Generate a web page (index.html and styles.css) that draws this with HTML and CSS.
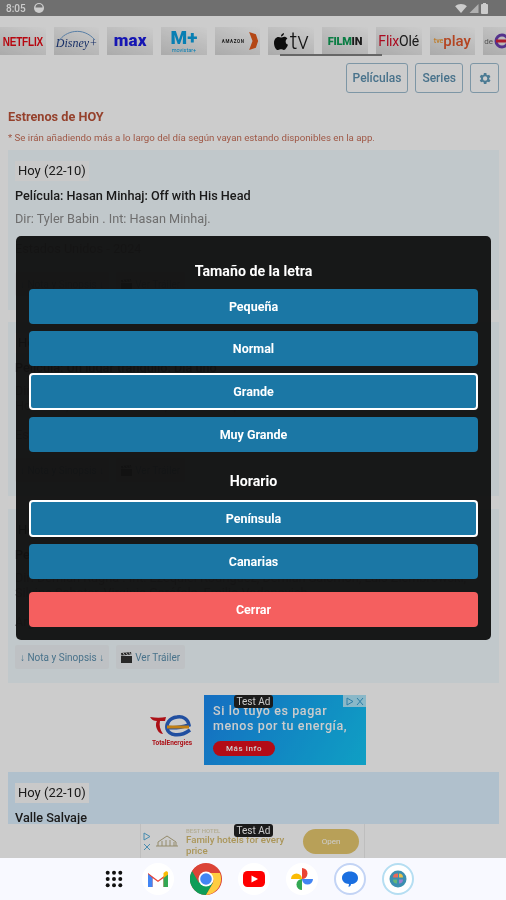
FILE: index.html
```html
<!DOCTYPE html>
<html lang="es">
<head>
<meta charset="UTF-8">
<title>Estrenos de HOY</title>
<link rel="stylesheet" href="styles.css">
</head>
<body>
<div id="page">
	<div id="statusbar">
		<span class="clock">8:05</span>
		<svg class="dot" width="10" height="10" viewBox="0 0 10 10"><circle cx="5" cy="5" r="5" fill="#fff"/><path d="M1.500 4.500a3.500 3.500 0 0 1 7 0z" fill="#8b8b8b"/></svg>
		<span class="status-right">
			<svg width="12" height="9" viewBox="0 0 13 10"><path d="M0 2.500C3.500-.8 9.500-.8 13 2.500L6.500 10z" fill="#fff"/></svg>
			<svg width="10" height="9" viewBox="0 0 10 10"><path d="M10 0v10H0z" fill="#ddd"/></svg>
			<svg width="7" height="11" viewBox="0 0 7 11"><rect y="1" width="7" height="10" rx="1" fill="#fff"/><rect x="2" width="3" height="2" fill="#fff"/></svg>
		</span>
	</div>
	<div id="logos">
		<div class="tile netflix"><span>NETFLIX</span></div>
		<div class="tile disney"><svg class="arc" width="40" height="14" viewBox="0 0 40 14"><path d="M2 13C8 3 26-2 38 12" fill="none" stroke="#6f9fd0"/></svg>Disney+</div>
		<div class="tile max">max</div>
		<div class="tile movistar"><b>M+</b><small>movistar+</small></div>
		<div class="tile prime"><i>AMAZON</i><svg width="13" height="18" viewBox="0 0 10 16"><path d="M2 0l6 2 2 6-2 6-6 2 3-8z" fill="#e2591b"/></svg></div>
		<div class="tile apple"><svg width="14" height="17" viewBox="0 0 14 17"><path d="M10 0c.2 1.800-1.400 3.500-3 3.400C6.800 1.800 8.400.2 10 0zM7 4.500c1 0 1.800-.8 3.300-.8 1.100 0 2.300.6 3.100 1.700-2.600 1.500-2.200 5.300.6 6.400-.8 2-2.400 5.200-4.100 5.200-1.100 0-1.600-.7-2.900-.7s-1.800.7-2.900.7C1.800 17 0 13.300 0 9.900 0 6.300 2.200 4 4.400 4c1.100 0 1.900.5 2.600.5z" fill="#111"/></svg><span>tv</span></div>
		<div class="tile filmin"><span>FILM</span><span>IN</span></div>
		<div class="tile flixole"><span>Flix</span>Olé</div>
		<div class="tile play"><small>tve</small>play</div>
		<div class="tile atres">de<svg width="14" height="16" viewBox="0 0 14 16"><circle cx="8" cy="8" r="6" fill="none" stroke="#6a3fb0" stroke-width="3"/><path d="M2 8h12" stroke="#d8213a" stroke-width="3"/></svg></div>
	</div>
	<div class="logo-scroll"></div>
	<div id="tabs">
		<a class="tab">Películas</a>
		<a class="tab">Series</a>
		<a class="tab gear"><svg width="15" height="15" viewBox="0 0 24 24"><path d="M19.400 13a7.500 7.500 0 0 0 0-2l2.100-1.600-2-3.500-2.500 1a7.500 7.500 0 0 0-1.700-1L15 3.200h-4l-.4 2.700a7.500 7.500 0 0 0-1.700 1l-2.500-1-2 3.500L6.500 11a7.500 7.500 0 0 0 0 2l-2.100 1.600 2 3.500 2.500-1a7.500 7.500 0 0 0 1.700 1l.4 2.700h4l.4-2.700a7.500 7.500 0 0 0 1.700-1l2.500 1 2-3.500zM13 15.500a3.500 3.500 0 1 1 0-7 3.500 3.500 0 0 1 0 7z" fill="#5f9ab8"/></svg></a>
	</div>
	<h2 class="heading">Estrenos de HOY</h2>
	<p class="note">* Se irán añadiendo más a lo largo del día según vayan estando disponibles en la app.</p>

	<div class="card">
		<span class="date">Hoy (22-10)</span>
		<p class="title">Película: Hasan Minhaj: Off with His Head</p>
		<p class="crew">Dir: Tyler Babin . Int: Hasan Minhaj.</p>
		<p class="country">Estados Unidos - 2024</p>
		<div class="actions">
			<a class="chip">↓ Nota y Sinopsis ↓</a>
			<a class="chip"><svg class="clapper" width="11" height="11" viewBox="0 0 11 11"><path d="M0 4h11v7H0zM0 1l10-1 .4 2.500-10 1z" fill="#333"/><path d="M2 .8l1.500 2.300M5 .5l1.500 2.300M8 .2l1.500 2.300" stroke="#ddd"/></svg>Ver Tráiler</a>
		</div>
	</div>
	<div class="card">
		<span class="date">Hoy (22-10)</span>
		<p class="title">Película: Un lugar tranquilo: Día uno</p>
		<p class="crew long">Dir: Michael Sarnoski . Int: Lupita Nyong'o, Joseph Quinn, Alex Wolff, Djimon Hounsou, Thomas Bennett, Eunice Cho, Eliane Umuhire.</p>
		<p class="country">Estados Unidos - 2024</p>
		<div class="actions">
			<a class="chip">↓ Nota y Sinopsis ↓</a>
			<a class="chip"><svg class="clapper" width="11" height="11" viewBox="0 0 11 11"><path d="M0 4h11v7H0zM0 1l10-1 .4 2.500-10 1z" fill="#333"/><path d="M2 .8l1.500 2.300M5 .5l1.500 2.300M8 .2l1.500 2.300" stroke="#ddd"/></svg>Ver Tráiler</a>
		</div>
	</div>
	<div class="card">
		<span class="date">Hoy (22-10)</span>
		<p class="title">Película: Cuando acecha la maldad</p>
		<p class="crew long">Dir: Demián Rugna . Int: Ezequiel Rodríguez, Demián Salomón, Luis Ziembrowski, Silvina Sabater, Virginia Garófalo, Emilio Vodanovich.</p>
		<p class="country">Argentina - 2023</p>
		<div class="actions">
			<a class="chip">↓ Nota y Sinopsis ↓</a>
			<a class="chip"><svg class="clapper" width="11" height="11" viewBox="0 0 11 11"><path d="M0 4h11v7H0zM0 1l10-1 .4 2.500-10 1z" fill="#333"/><path d="M2 .8l1.500 2.300M5 .5l1.500 2.300M8 .2l1.500 2.300" stroke="#ddd"/></svg>Ver Tráiler</a>
		</div>
	</div>

	<div class="banner">
		<div class="te-logo">
			<svg width="44" height="26" viewBox="0 0 44 26"><path d="M16 14c4 1 13 1 23-2-1-6-6-9-12-8-8 1-11 7-10 12 2 6 12 9 23 1" fill="none" stroke="#2a63c9" stroke-width="3.500"/><path d="M17 14h22" stroke="#f3a01a" stroke-width="3"/><path d="M0 4c6 1 11 1 16 0l-1 4h-5c-1 4 0 9 3 13-3 0-6-3-7-8 0-2 0-4 1-5-3 0-5-1-7-4z" fill="#d8141c"/></svg>
			<span>TotalEnergies</span>
		</div>
		<div class="te-ad">
			<p>Si lo tuyo es pagar<br>menos por tu energía,</p>
			<span class="te-btn">Más info</span>
			<span class="adchoice"><svg width="8" height="9" viewBox="0 0 8 9"><path d="M1 1l6 3.500L1 8z" fill="none" stroke="#3a9ed0"/></svg><svg width="8" height="9" viewBox="0 0 8 9"><path d="M1 1l6 7M7 1L1 8" stroke="#3a9ed0"/></svg></span>
		</div>
		<span class="testad">Test Ad</span>
	</div>

	<div class="card blue">
		<span class="date">Hoy (22-10)</span>
		<p class="title">Valle Salvaje</p>
	</div>

	<div id="bottomad">
		<div class="ad-inner">
			<div class="ad-mark">
				<svg width="8" height="9" viewBox="0 0 8 9"><path d="M1 1l6 3.500L1 8z" fill="none" stroke="#5ab0dc"/></svg>
				<svg width="8" height="8" viewBox="0 0 8 8"><path d="M1 1l6 6M7 1L1 7" stroke="#5ab0dc"/></svg>
			</div>
			<svg class="hotel" width="24" height="12" viewBox="0 0 24 12"><path d="M1 11h22M3 11V7l9-6 9 6v4M7 11V6M11 11V5M15 11V5M19 11V7" fill="none" stroke="#b9ae86"/></svg>
			<div class="ad-text">
				<small>BEST HOTEL</small>
				<p>Family hotels for every price</p>
			</div>
			<span class="open">Open</span>
		</div>
		<span class="testad">Test Ad</span>
	</div>

	<div id="dim"></div>

	<div id="modal">
		<h3 class="modal-title">Tamaño de la letra</h3>
		<button class="opt">Pequeña</button>
		<button class="opt">Normal</button>
		<button class="opt selected">Grande</button>
		<button class="opt">Muy Grande</button>
		<h3 class="modal-title second">Horario</h3>
		<button class="opt selected">Península</button>
		<button class="opt">Canarias</button>
		<button class="opt close">Cerrar</button>
	</div>
</div>

<div id="navbar">
	<svg class="apps" width="18" height="18" viewBox="0 0 20 20" fill="#111"><circle cx="3" cy="3" r="2.200"/><circle cx="10" cy="3" r="2.200"/><circle cx="17" cy="3" r="2.200"/><circle cx="3" cy="10" r="2.200"/><circle cx="10" cy="10" r="2.200"/><circle cx="17" cy="10" r="2.200"/><circle cx="3" cy="17" r="2.200"/><circle cx="10" cy="17" r="2.200"/><circle cx="17" cy="17" r="2.200"/></svg>
	<svg width="32" height="32" viewBox="0 0 32 32"><circle cx="16" cy="16" r="16" fill="#fff"/><path d="M6 24V10l10 7.500L26 10v14h-4.500V15L16 19l-5.500-4v9z" fill="#ea4335"/><path d="M6 24h4.500v-9L6 11z" fill="#4285f4"/><path d="M21.500 24H26V11l-4.500 4z" fill="#34a853"/><path d="M21.500 15L26 11.500V10c0-1.500-1.500-2-2.500-1.500L21.500 10z" fill="#fbbc04"/></svg>
	<svg width="32" height="32" viewBox="0 0 32 32"><circle cx="16" cy="16" r="16" fill="#db4437"/><path d="M16 16L2.100 8A16 16 0 0 0 16 32l7-12z" fill="#0f9d58"/><path d="M16 10h13.900A16 16 0 0 1 16 32l7-12a8 8 0 0 0-7-10z" fill="#ffcd40"/><path d="M2.100 8L9 20a8 8 0 0 1 7-10h13.900A16 16 0 0 0 2.100 8z" fill="#db4437"/><circle cx="16" cy="16" r="7.500" fill="#fff"/><circle cx="16" cy="16" r="5.800" fill="#4285f4"/></svg>
	<svg width="32" height="32" viewBox="0 0 32 32"><circle cx="16" cy="16" r="16" fill="#fff"/><rect x="5" y="8" width="22" height="16" rx="4.500" fill="#f00"/><path d="M13.500 12.500L20 16l-6.500 3.500z" fill="#fff"/></svg>
	<svg width="32" height="32" viewBox="0 0 32 32"><circle cx="16" cy="16" r="16" fill="#fff"/><path d="M16 16V5a5.500 5.500 0 0 1 0 11z" fill="#ea4335"/><path d="M16 16h11a5.500 5.500 0 0 1-11 0z" fill="#4285f4"/><path d="M16 16v11a5.500 5.500 0 0 1 0-11z" fill="#34a853"/><path d="M16 16H5a5.500 5.500 0 0 1 11 0z" fill="#fbbc04"/></svg>
	<svg width="32" height="32" viewBox="0 0 32 32"><circle cx="16" cy="16" r="15" fill="#fff" stroke="#c3d4f5" stroke-width="2"/><path d="M8 15c0-4 3.500-6.500 8-6.500s8 2.500 8 6.500-3.500 6-7 6c0 1.500-1 2.500-2.500 3l.5-3c-4-.3-7-2.500-7-6z" fill="#1a6fe0"/></svg>
	<svg width="32" height="32" viewBox="0 0 32 32"><circle cx="16" cy="16" r="15" fill="#fff" stroke="#b5def2" stroke-width="2"/><circle cx="16" cy="16" r="8.500" fill="#3c8fb0"/><path d="M16 10.500h-1a4 4 0 0 0-4 4h5z" fill="#ea6a5a"/><path d="M17 10.500a4 4 0 0 1 4 4h-4z" fill="#e8c14a"/><path d="M11 16.500a4 4 0 0 0 4 4v-4z" fill="#66b877"/><path d="M17 16.500v4a4 4 0 0 0 4-4z" fill="#9d7fd0"/></svg>
</div>
</body>
</html>
```

FILE: styles.css
```css
*{
	box-sizing: border-box;
}
html, body{
	margin: 0;
	padding: 0;
}
body{
	width: 506px;
	height: 900px;
	overflow: hidden;
	font-family: Roboto, sans-serif;
	background-color: #fff;
}
p, h2, h3{
	margin: 0;
}
#page{
	position: relative;
	height: 858px;
	overflow: hidden;
	background-color: #fff;
	filter: blur(.4px);
}

/* status bar */
#statusbar{
	height: 16px;
	background-color: #8b8b8b;
	color: #fff;
	display: flex;
	align-items: center;
	padding: 0 18px 0 6px;
	font-size: 10px;
	font-weight: 500;
}
.dot{
	margin-left: 8px;
}
.status-right{
	margin-left: auto;
	display: flex;
	align-items: center;
	gap: 2px;
}

/* logos */
#logos{
	display: flex;
	gap: 8px;
	padding: 11px 0 0 0;
	width: 520px;
}
.tile{
	position: relative;
	flex: 0 0 45.700px;
	height: 28px;
	background: linear-gradient(20deg, #d6d6d6, #ececec 55%, #fff);
	display: flex;
	align-items: center;
	justify-content: center;
	overflow: hidden;
}
.netflix{
	color: #e50914;
	font-family: "Liberation Sans", sans-serif;
	font-weight: bold;
	font-size: 10px;
	letter-spacing: -.2px;
}
.netflix span{
	display: inline-block;
	transform: scaleY(1.3);
}
.disney{
	color: #1d3b80;
	font-family: "Liberation Serif", serif;
	font-style: italic;
	font-size: 12px;
	padding-top: 4px;
}
.arc{
	position: absolute;
	top: 1px;
	left: 3px;
}
.max{
	color: #1c1ce0;
	font-size: 17px;
	font-weight: 900;
	letter-spacing: .1px;
	padding-bottom: 2px;
}
.movistar{
	flex-direction: column;
	color: #0b9fe0;
}
.movistar b{
	font-size: 19px;
	line-height: 19px;
	font-weight: 900;
}
.movistar small{
	font-size: 5.500px;
	line-height: 7px;
}
.prime{
	justify-content: flex-end;
	gap: 2px;
	padding-right: 1px;
}
.prime i{
	font-size: 4.500px;
	font-style: normal;
	font-weight: bold;
	letter-spacing: .6px;
	color: #222;
}
.apple{
	gap: 2px;
	font-size: 24px;
	font-weight: 300;
	color: #1a1a1a;
}
.filmin{
	font-size: 11px;
	font-weight: 900;
	letter-spacing: -.3px;
	color: #0e9d56;
}
.filmin span + span{
	color: #222;
}
.flixole{
	font-size: 14px;
	letter-spacing: -.2px;
	color: #222;
}
.flixole span{
	color: #d5102a;
}
.play{
	color: #e0552a;
	font-size: 15px;
	font-weight: 500;
}
.play small{
	font-size: 7px;
	color: #ee9a30;
}
.atres{
	font-size: 8px;
	justify-content: flex-start;
	color: #666;
	gap: 1px;
	padding-left: 1px;
}
.logo-scroll{
	position: absolute;
	top: 54px;
	left: 280px;
	width: 102px;
	height: 2px;
	background-color: #808080;
}

/* tabs */
#tabs{
	display: flex;
	justify-content: flex-end;
	gap: 7px;
	padding: 8px 7px 0 0;
}
.tab{
	height: 30px;
	padding: 0 6px;
	border: 1px solid #9dbccf;
	border-radius: 3px;
	color: #5b8fae;
	font-size: 12px;
	font-weight: 500;
	display: flex;
	align-items: center;
}
.gear{
	width: 29px;
	justify-content: center;
	padding: 0;
}

.heading{
	margin: 16px 0 0 8px;
	font-size: 12.700px;
	line-height: 16px;
	font-weight: bold;
	color: #bb5238;
}
.note{
	margin: 7px 0 0 8px;
	font-size: 9.700px;
	line-height: 12px;
	color: #c8705a;
	white-space: nowrap;
}

/* cards */
.card{
	margin: 0 7px 13px 8px;
	padding: 11px 7px 14px;
	background-color: #f2fafe;
}
.note + .card{
	margin-top: 6px;
	margin-bottom: 12px;
}
.date{
	display: block;
	width: fit-content;
	height: 20px;
	padding: 0 3px;
	font-size: 13px;
	line-height: 20px;
	color: #222;
	background-color: #fcfcfc;
}
.title{
	margin-top: 7px;
	font-size: 12.700px;
	line-height: 16px;
	font-weight: 500;
	color: #222;
}
.crew{
	margin-top: 7px;
	font-size: 12.700px;
	line-height: 16px;
	color: #8a8a8a;
}
.crew.long{
	line-height: 15px;
}
.country{
	margin-top: 14px;
	font-size: 12.700px;
	line-height: 16px;
	color: #8a8a8a;
}
.actions{
	display: flex;
	gap: 7px;
	margin-top: 15px;
}
.chip{
	height: 24px;
	padding: 0 5px;
	background-color: #eef2f5;
	color: #5b8fae;
	font-size: 10px;
	display: flex;
	align-items: center;
	border-radius: 2px;
}
.clapper{
	margin-right: 3px;
}
.card.blue{
	height: 60px;
	margin-top: 7px;
	margin-bottom: 0;
	background-color: #dcf0ff;
}

/* banner ad */
.banner{
	position: relative;
	display: flex;
	height: 70px;
	margin: -1px 0 0 140px;
	width: 226px;
}
.te-logo{
	width: 64px;
	display: flex;
	flex-direction: column;
	align-items: center;
	padding-top: 18px;
	color: #d8141c;
	font-size: 6.500px;
	font-weight: bold;
}
.te-ad{
	position: relative;
	flex: 1;
	padding: 8px 0 0 9px;
	background: linear-gradient(120deg, #1a8af2, #13c8f5);
	color: #fff;
	font-size: 12.500px;
	line-height: 15px;
	font-weight: 500;
	letter-spacing: .6px;
}
.te-btn{
	display: block;
	width: 62px;
	height: 15px;
	margin-top: 8px;
	border-radius: 8px;
	background-color: #e0101c;
	font-size: 8px;
	line-height: 15px;
	text-align: center;
}
.adchoice{
	position: absolute;
	top: 0;
	right: 0;
	width: 23px;
	height: 12px;
	background-color: rgba(255, 255, 255, .65);
	display: flex;
	align-items: center;
	justify-content: center;
	gap: 2px;
}
.testad{
	position: absolute;
	top: 0;
	left: 94px;
	width: 39px;
	height: 13px;
	border-radius: 3px;
	background-color: #222;
	color: #fff;
	font-size: 10px;
	line-height: 13px;
	text-align: center;
	z-index: 5;
}

/* bottom ad */
#bottomad{
	position: absolute;
	left: 0;
	right: 0;
	bottom: 0;
	height: 34px;
	background-color: #fff;
	z-index: 1;
}
.ad-inner{
	display: flex;
	align-items: center;
	margin-left: 140px;
	width: 225px;
	height: 34px;
	border-left: 1px solid #eee;
	border-right: 1px solid #eee;
}
.ad-mark{
	width: 10px;
	display: flex;
	flex-direction: column;
	gap: 2px;
	margin: 0 2px 0 2px;
}
.hotel{
	flex: none;
	margin-right: 7px;
}
.ad-text{
	width: 110px;
	color: #d6bc70;
	font-size: 9.700px;
	line-height: 11px;
	font-weight: 500;
}
.ad-text small{
	font-size: 6px;
	line-height: 7px;
	display: block;
	color: #e0d8b8;
}
.open{
	width: 56px;
	height: 25px;
	margin-left: 7px;
	border-radius: 13px;
	background-color: #e7c96e;
	color: #fff;
	font-size: 8px;
	line-height: 25px;
	text-align: center;
}
#bottomad .testad{
	left: 234px;
}

/* everything behind the dialog goes grey */
#dim{
	position: absolute;
	top: 0;
	left: 0;
	right: 0;
	bottom: 0;
	background-color: rgba(0, 0, 0, .2);
	z-index: 8;
}

/* dialog */
#modal{
	position: absolute;
	top: 236px;
	left: 16px;
	width: 475px;
	height: 404px;
	padding: 0 13px;
	border-radius: 5px;
	background-color: rgba(18, 18, 18, .97);
	z-index: 9;
	overflow: hidden;
}
.modal-title{
	margin: 27px 0 10px;
	color: #fff;
	font-size: 14.200px;
	line-height: 16px;
	font-weight: bold;
	text-align: center;
}
.modal-title.second{
	margin: 21px 0 11px;
}
.opt{
	display: block;
	width: 100%;
	height: 35px;
	margin-bottom: 7px;
	border: 0;
	border-radius: 4px;
	background-color: #1b77a5;
	color: #fff;
	font-family: Roboto, sans-serif;
	font-size: 12.500px;
	font-weight: bold;
}
.opt.selected{
	height: 37px;
	border: 2px solid #fff;
}
.opt.close{
	margin-top: 13px;
	background-color: #f55f5f;
}

/* nav */
#navbar{
	height: 42px;
	background-color: #f8f9ff;
	display: flex;
	align-items: center;
	justify-content: center;
	gap: 16px;
	padding-left: 12px;
}
.apps{
	margin-right: 3px;
}
```
